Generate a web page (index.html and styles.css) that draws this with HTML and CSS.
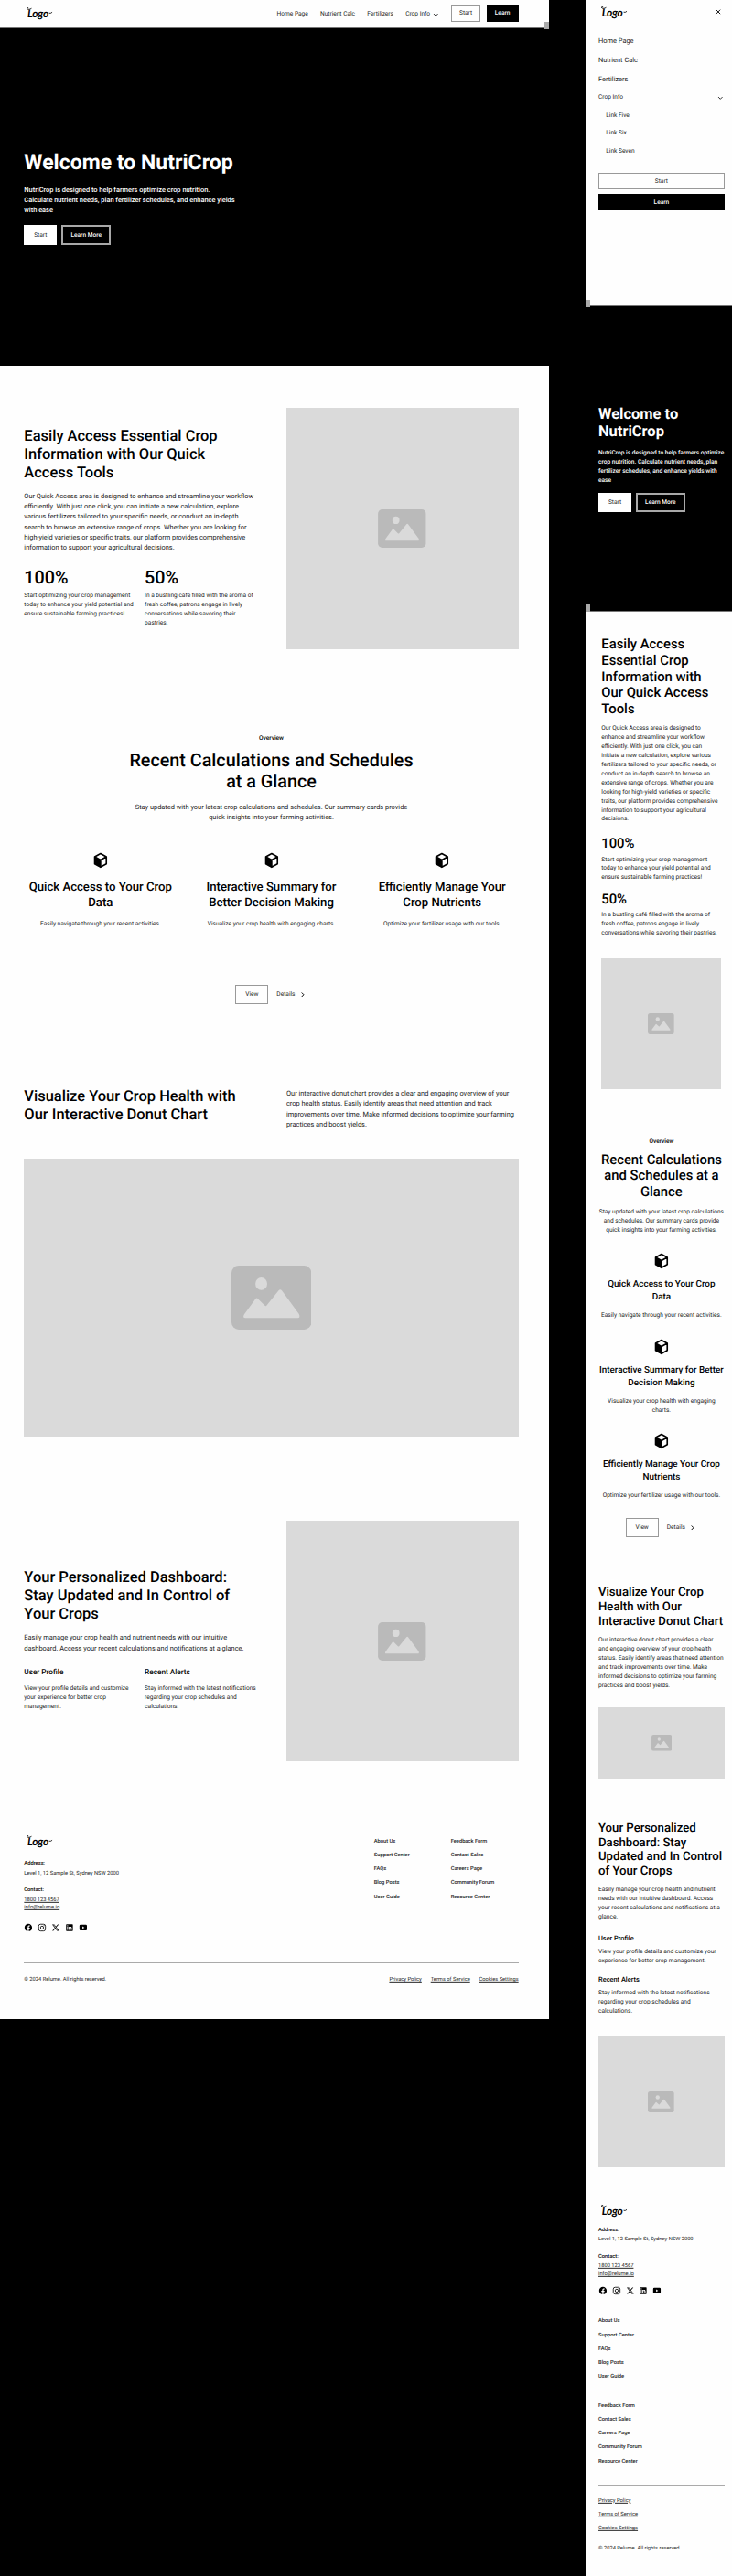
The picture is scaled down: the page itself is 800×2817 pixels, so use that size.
FILE: index.html
```html
<!DOCTYPE html>
<html lang="en">
<head>
<meta charset="utf-8">
<title>NutriCrop</title>
<link rel="stylesheet" href="styles.css">
</head>
<body>
<svg class="sprite" width="0" height="0" aria-hidden="true">
  <symbol id="picture" viewBox="0 0 100 80">
    <rect width="100" height="80" rx="9" fill="#bababa"/>
    <ellipse cx="37.3" cy="22.7" rx="7.4" ry="7.9" fill="#dadada"/>
    <path d="M16 61 30.200 41.500Q31.600 39.600 33 41.500L41.500 49.800Q43 51.500 44.300 49.500L59 31.200Q61 28.800 63 31.200L84.500 60.500Q86.500 65.400 83 65.400H17Q13.500 65.400 16 61Z" fill="#dadada"/>
  </symbol>
  <symbol id="cube" viewBox="0 0 24 24">
    <path d="M12 3 19.700 7.200V16.800L12 21 4.300 16.800V7.200ZM4.300 7.200 12 11.600 19.700 7.200M12 11.600V21" fill="none" stroke="#000" stroke-width="2" stroke-linejoin="round"/>
    <path d="M4.300 7.200 12 11.600V21L4.300 16.800Z"/>
  </symbol>
  <symbol id="chev-down" viewBox="0 0 16 16"><path d="M2.500 5.500 8 11l5.500-5.500" fill="none" stroke="#000" stroke-width="2"/></symbol>
  <symbol id="chev-right" viewBox="0 0 24 24"><path d="m9 6.500 5.500 5.500L9 17.500" fill="none" stroke="#000" stroke-width="2.400"/></symbol>
  <symbol id="close" viewBox="0 0 24 24"><path d="m6.500 6.500 11 11m0-11-11 11" fill="none" stroke="#000" stroke-width="2.200"/></symbol>
  <symbol id="swash" viewBox="0 0 72 36">
    <path d="M15 6C11 9 4 9 3 5Q4 2 7 4" fill="none" stroke="#000" stroke-width="2" stroke-linecap="round"/>
    <path d="M63 18Q66 19.500 70 16" fill="none" stroke="#000" stroke-width="2" stroke-linecap="round"/>
  </symbol>
  <symbol id="facebook" viewBox="0 0 24 24"><path d="M22 12.060C22 6.500 17.500 2 12 2S2 6.500 2 12.060c0 5 3.660 9.150 8.440 9.900v-7H7.900v-2.900h2.540V9.850c0-2.510 1.490-3.890 3.780-3.890 1.090 0 2.230.19 2.230.19v2.470h-1.260c-1.240 0-1.630.77-1.630 1.560v1.880h2.780l-.45 2.900h-2.330v7A10 10 0 0 0 22 12.060z"/></symbol>
  <symbol id="instagram" viewBox="0 0 24 24"><g fill="none" stroke="#000" stroke-width="2"><rect x="3" y="3" width="18" height="18" rx="5"/><circle cx="12" cy="12" r="4"/></g><circle cx="17.300" cy="6.700" r="1.300"/></symbol>
  <symbol id="x" viewBox="0 0 24 24"><path d="M17.180 3.500h2.900l-6.330 7.240L21.200 20.500h-5.830l-4.570-5.970-5.220 5.970h-2.900l6.770-7.740L2.300 3.500h5.980l4.130 5.460zm-1.020 15.300h1.610L7.420 5.150H5.700z"/></symbol>
  <symbol id="linkedin" viewBox="0 0 24 24"><path fill-rule="evenodd" d="M4.500 3h15A1.500 1.500 0 0 1 21 4.500v15a1.500 1.500 0 0 1-1.500 1.500h-15A1.500 1.500 0 0 1 3 19.500v-15A1.500 1.500 0 0 1 4.500 3zM8.300 18.300V9.800H5.700v8.500zM7 8.600a1.500 1.500 0 1 0 0-3 1.500 1.500 0 0 0 0 3zm11.300 9.700v-4.700c0-2.500-1.300-3.900-3.200-3.900-1.500 0-2.200.9-2.500 1.400V9.800H10v8.500h2.600v-4.600c0-1.200.6-1.800 1.500-1.800s1.400.7 1.400 1.800v4.600z"/></symbol>
  <symbol id="youtube" viewBox="0 0 24 24"><path fill-rule="evenodd" d="M5 4.500h14a3 3 0 0 1 3 3v9a3 3 0 0 1-3 3H5a3 3 0 0 1-3-3v-9a3 3 0 0 1 3-3zM10 8.800v6.400l5.300-3.200z"/></symbol>
</svg>

<main class="board">
  <div class="frame desktop">
    <header class="nav">
      <div class="logo"><svg><use href="#swash"/></svg><span>Logo</span></div>
      <nav class="nav-links">
        <a>Home Page</a><a>Nutrient Calc</a><a>Fertilizers</a>
        <a class="drop">Crop Info <svg class="chev"><use href="#chev-down"/></svg></a>
      </nav>
      <div class="nav-actions"><a class="btn small">Start</a><a class="btn small solid">Learn</a></div>
      <i class="handle"></i>
    </header>

    <section class="hero">
      <h1>Welcome to NutriCrop</h1>
      <p>NutriCrop is designed to help farmers optimize crop nutrition.<br>Calculate nutrient needs, plan fertilizer schedules, and enhance yields<br>with ease</p>
      <div class="actions"><a class="btn light">Start</a><a class="btn ghost">Learn More</a></div>
    </section>

    <section class="split">
      <div class="copy">
        <h2>Easily Access Essential Crop<br>Information with Our Quick<br>Access Tools</h2>
        <p class="lead">Our Quick Access area is designed to enhance and streamline your workflow<br>efficiently. With just one click, you can initiate a new calculation, explore<br>various fertilizers tailored to your specific needs, or conduct an in-depth<br>search to browse an extensive range of crops. Whether you are looking for<br>high-yield varieties or specific traits, our platform provides comprehensive<br>information to support your agricultural decisions.</p>
        <div class="pair">
          <div><strong class="stat">100%</strong><p>Start optimizing your crop management<br>today to enhance your yield potential and<br>ensure sustainable farming practices!</p></div>
          <div><strong class="stat">50%</strong><p>In a bustling café filled with the aroma of<br>fresh coffee, patrons engage in lively<br>conversations while savoring their<br>pastries.</p></div>
        </div>
      </div>
      <div class="image"><svg><use href="#picture"/></svg></div>
    </section>

    <section class="features">
      <p class="tag">Overview</p>
      <h2>Recent Calculations and Schedules<br>at a Glance</h2>
      <p class="lead">Stay updated with your latest crop calculations and schedules. Our summary cards provide<br>quick insights into your farming activities.</p>
      <div class="cards">
        <div class="card"><svg><use href="#cube"/></svg><h3>Quick Access to Your Crop<br>Data</h3><p>Easily navigate through your recent activities.</p></div>
        <div class="card"><svg><use href="#cube"/></svg><h3>Interactive Summary for<br>Better Decision Making</h3><p>Visualize your crop health with engaging charts.</p></div>
        <div class="card"><svg><use href="#cube"/></svg><h3>Efficiently Manage Your<br>Crop Nutrients</h3><p>Optimize your fertilizer usage with our tools.</p></div>
      </div>
      <div class="actions"><a class="btn">View</a><a class="more">Details <svg><use href="#chev-right"/></svg></a></div>
    </section>

    <section class="chart">
      <div class="chart-head">
        <h2>Visualize Your Crop Health with<br>Our Interactive Donut Chart</h2>
        <p class="lead">Our interactive donut chart provides a clear and engaging overview of your<br>crop health status. Easily identify areas that need attention and track<br>improvements over time. Make informed decisions to optimize your farming<br>practices and boost yields.</p>
      </div>
      <div class="image wide"><svg><use href="#picture"/></svg></div>
    </section>

    <section class="split">
      <div class="copy">
        <h2>Your Personalized Dashboard:<br>Stay Updated and In Control of<br>Your Crops</h2>
        <p class="lead">Easily manage your crop health and nutrient needs with our intuitive<br>dashboard. Access your recent calculations and notifications at a glance.</p>
        <div class="pair">
          <div><h4>User Profile</h4><p>View your profile details and customize<br>your experience for better crop<br>management.</p></div>
          <div><h4>Recent Alerts</h4><p>Stay informed with the latest notifications<br>regarding your crop schedules and<br>calculations.</p></div>
        </div>
      </div>
      <div class="image"><svg><use href="#picture"/></svg></div>
    </section>

    <footer class="footer">
      <div class="foot-top">
        <div class="contact">
          <div class="logo"><svg><use href="#swash"/></svg><span>Logo</span></div>
          <b>Address:</b><p>Level 1, 12 Sample St, Sydney NSW 2000</p>
          <b>Contact:</b><p><u>1800 123 4567</u><br><u>info@relume.io</u></p>
          <div class="social"><svg><use href="#facebook"/></svg><svg><use href="#instagram"/></svg><svg><use href="#x"/></svg><svg><use href="#linkedin"/></svg><svg><use href="#youtube"/></svg></div>
        </div>
        <div class="foot-links">
          <ul><li>About Us</li><li>Support Center</li><li>FAQs</li><li>Blog Posts</li><li>User Guide</li></ul>
          <ul><li>Feedback Form</li><li>Contact Sales</li><li>Careers Page</li><li>Community Forum</li><li>Resource Center</li></ul>
        </div>
      </div>
      <div class="legal"><p>© 2024 Relume. All rights reserved.</p><div class="policies"><u>Privacy Policy</u><u>Terms of Service</u><u>Cookies Settings</u></div></div>
    </footer>
  </div>

  <div class="frame mobile">
    <header class="menu">
      <div class="menu-bar"><div class="logo"><svg><use href="#swash"/></svg><span>Logo</span></div><svg class="x"><use href="#close"/></svg></div>
      <nav class="menu-links">
        <a>Home Page</a><a>Nutrient Calc</a><a>Fertilizers</a>
        <a class="drop">Crop Info <svg class="chev"><use href="#chev-down"/></svg></a>
        <a class="sub">Link Five</a><a class="sub">Link Six</a><a class="sub">Link Seven</a>
      </nav>
      <div class="menu-actions"><a class="btn small">Start</a><a class="btn small solid">Learn</a></div>
      <i class="handle"></i>
    </header>

    <section class="hero">
      <h1>Welcome to<br>NutriCrop</h1>
      <p>NutriCrop is designed to help farmers optimize<br>crop nutrition. Calculate nutrient needs, plan<br>fertilizer schedules, and enhance yields with<br>ease</p>
      <div class="actions"><a class="btn light">Start</a><a class="btn ghost">Learn More</a></div>
      <i class="handle"></i>
    </section>

    <section class="split inset">
      <div class="copy">
        <h2>Easily Access<br>Essential Crop<br>Information with<br>Our Quick Access<br>Tools</h2>
        <p class="lead">Our Quick Access area is designed to<br>enhance and streamline your workflow<br>efficiently. With just one click, you can<br>initiate a new calculation, explore various<br>fertilizers tailored to your specific needs, or<br>conduct an in-depth search to browse an<br>extensive range of crops. Whether you are<br>looking for high-yield varieties or specific<br>traits, our platform provides comprehensive<br>information to support your agricultural<br>decisions.</p>
        <div class="pair">
          <div><strong class="stat">100%</strong><p>Start optimizing your crop management<br>today to enhance your yield potential and<br>ensure sustainable farming practices!</p></div>
          <div><strong class="stat">50%</strong><p>In a bustling café filled with the aroma of<br>fresh coffee, patrons engage in lively<br>conversations while savoring their pastries.</p></div>
        </div>
      </div>
      <div class="image"><svg><use href="#picture"/></svg></div>
    </section>

    <section class="features">
      <p class="tag">Overview</p>
      <h2>Recent Calculations<br>and Schedules at a<br>Glance</h2>
      <p class="lead">Stay updated with your latest crop calculations<br>and schedules. Our summary cards provide<br>quick insights into your farming activities.</p>
      <div class="cards">
        <div class="card"><svg><use href="#cube"/></svg><h3>Quick Access to Your Crop<br>Data</h3><p>Easily navigate through your recent activities.</p></div>
        <div class="card"><svg><use href="#cube"/></svg><h3>Interactive Summary for Better<br>Decision Making</h3><p>Visualize your crop health with engaging<br>charts.</p></div>
        <div class="card"><svg><use href="#cube"/></svg><h3>Efficiently Manage Your Crop<br>Nutrients</h3><p>Optimize your fertilizer usage with our tools.</p></div>
      </div>
      <div class="actions"><a class="btn">View</a><a class="more">Details <svg><use href="#chev-right"/></svg></a></div>
    </section>

    <section class="chart">
      <div class="chart-head">
        <h2>Visualize Your Crop<br>Health with Our<br>Interactive Donut Chart</h2>
        <p class="lead">Our interactive donut chart provides a clear<br>and engaging overview of your crop health<br>status. Easily identify areas that need attention<br>and track improvements over time. Make<br>informed decisions to optimize your farming<br>practices and boost yields.</p>
      </div>
      <div class="image wide"><svg><use href="#picture"/></svg></div>
    </section>

    <section class="split profile">
      <div class="copy">
        <h2>Your Personalized<br>Dashboard: Stay<br>Updated and In Control<br>of Your Crops</h2>
        <p class="lead">Easily manage your crop health and nutrient<br>needs with our intuitive dashboard. Access<br>your recent calculations and notifications at a<br>glance.</p>
        <div class="pair">
          <div><h4>User Profile</h4><p>View your profile details and customize your<br>experience for better crop management.</p></div>
          <div><h4>Recent Alerts</h4><p>Stay informed with the latest notifications<br>regarding your crop schedules and<br>calculations.</p></div>
        </div>
      </div>
      <div class="image"><svg><use href="#picture"/></svg></div>
    </section>

    <footer class="footer">
      <div class="contact">
        <div class="logo"><svg><use href="#swash"/></svg><span>Logo</span></div>
        <b>Address:</b><p>Level 1, 12 Sample St, Sydney NSW 2000</p>
        <b>Contact:</b><p><u>1800 123 4567</u><br><u>info@relume.io</u></p>
        <div class="social"><svg><use href="#facebook"/></svg><svg><use href="#instagram"/></svg><svg><use href="#x"/></svg><svg><use href="#linkedin"/></svg><svg><use href="#youtube"/></svg></div>
      </div>
      <div class="foot-links">
        <ul><li>About Us</li><li>Support Center</li><li>FAQs</li><li>Blog Posts</li><li>User Guide</li></ul>
        <ul><li>Feedback Form</li><li>Contact Sales</li><li>Careers Page</li><li>Community Forum</li><li>Resource Center</li></ul>
      </div>
      <div class="legal"><div class="policies"><u>Privacy Policy</u><u>Terms of Service</u><u>Cookies Settings</u></div><p>© 2024 Relume. All rights reserved.</p></div>
    </footer>
  </div>
</main>
</body>
</html>
```

FILE: styles.css
```css
* { box-sizing: border-box; margin: 0; padding: 0; }

body { background: #000; }

.sprite { position: absolute; }

/* Two artboards side by side, each drawn at 41% of its design size. */
.board {
  display: grid;
  grid-template-columns: 600px 160px;
  column-gap: 40px;
  align-items: start;
  height: 2817px;
  overflow: hidden;
}

.frame {
  zoom: 0.41181;
  background: #fefefe;
  color: #222;
  font: 16px/24px Roboto, "Liberation Sans", sans-serif;
  text-rendering: geometricPrecision;
  white-space: nowrap;
}

.desktop { --left: 64px; --right: 81px; height: 5362px; }
.mobile { --left: 34px; --right: 20px; height: 6842px; }

h1, h2, h3 { font-weight: 500; }
h1 { font-weight: 700; }
h4, b, .tag { font-weight: 500; }
h2, h3, h4, b, .tag, .stat { color: #000; }
ul { list-style: none; }

/* Optical drop of the type inside its line boxes */
h1, h2, h3, h4, p, b, .stat, li, .policies u,
.nav-links a, .menu-links a, .more { translate: 0 2px; }

/* Logo */
.logo { position: relative; width: 84px; height: 36px; color: #000; }
.logo span {
  display: block;
  padding-left: 9px;
  font: italic 700 29px/37px Lato, sans-serif;
  letter-spacing: -0.5px;
}
.logo svg { position: absolute; left: 4px; top: 0; width: 72px; height: 36px; }

/* Buttons */
.actions { display: flex; gap: 12px; }
.btn {
  display: flex;
  align-items: center;
  justify-content: center;
  height: 50px;
  padding: 3px 24px 0;
  border: 1px solid #999;
}
.btn.small { height: 43px; padding: 3px 20px 0; }
.btn.solid { background: #000; border-color: #000; color: #fff; font-weight: 500; }
.btn.light { background: #fff; border-color: #fff; height: 52px; color: #222; }
.btn.ghost { height: 52px; padding: 3px 20px 0; border: 5px solid #a8a8a8; color: #fff; font-weight: 500; }
.more { display: flex; align-items: center; gap: 8px; }
.more svg { width: 24px; height: 24px; }
.chev { width: 16px; height: 16px; }
.handle { position: absolute; background: #aaa; }

/* Desktop navigation */
.nav {
  position: relative;
  display: flex;
  align-items: center;
  height: 72px;
  padding: 0 var(--right) 0 var(--left);
}
.nav .handle { right: 0; top: 58px; width: 15px; height: 20px; z-index: 1; }
.nav-links { display: flex; gap: 32px; margin-left: auto; }
.drop { display: flex; align-items: center; gap: 6px; }
.nav-actions { display: flex; gap: 15px; margin-left: 33px; }

/* Mobile menu */
.menu { position: relative; height: 812px; padding: 0 var(--right) 0 var(--left); }
.menu-bar { display: flex; align-items: center; justify-content: space-between; height: 64px; margin-bottom: 16px; }
.menu-bar .x { width: 24px; height: 24px; margin-right: 5px; }
.menu-links { display: flex; flex-direction: column; }
.menu-links a { padding: 12px 0; font-size: 18px; line-height: 27px; }
.menu-links .drop, .menu-links .sub { font-size: 16px; line-height: 24px; }
.menu-links .drop { justify-content: space-between; padding-right: 4px; }
.menu-links .sub { padding-left: 20px; }
.menu-actions { display: grid; gap: 14px; margin-top: 34px; }
.menu .handle, .mobile .hero .handle { left: 0; bottom: -4px; width: 12px; height: 20px; z-index: 1; }

/* Hero */
.hero {
  position: relative;
  display: flex;
  flex-direction: column;
  justify-content: center;
  height: 900px;
  padding: 0 var(--right) 0 var(--left);
  background: #000;
  border-top: 4px solid #777;
  color: #fff;
}
.hero h1 { font-size: 56px; line-height: 67.2px; margin-bottom: 24px; }
.hero p { font-size: 18px; line-height: 27px; font-weight: 500; margin-bottom: 30px; }

/* Shared section text */
h2 { font-size: 40px; line-height: 48px; margin-bottom: 24px; }
.lead { font-size: 18px; line-height: 27px; }
.split, .features, .chart { padding: 112px var(--right) 112px var(--left); }

/* Copy beside picture */
.split { display: grid; grid-template-columns: 616px 616px; column-gap: 80px; align-items: center; }
.pair { display: grid; grid-template-columns: 296px 296px; gap: 24px; margin-top: 32px; padding: 8px 0; }
.stat { display: block; font-size: 48px; line-height: 57.6px; font-weight: 500; margin-bottom: 8px; }
h4 { font-size: 20px; line-height: 28px; margin-bottom: 16px; }
.image { display: flex; align-items: center; justify-content: center; height: 640px; background: #dadada; }
.image svg { width: 128px; height: 102px; }

/* Feature cards */
.features { display: flex; flex-direction: column; align-items: center; text-align: center; }
.tag { margin-bottom: 16px; }
.features h2 { font-size: 48px; line-height: 57.6px; }
.cards { display: grid; grid-template-columns: repeat(3, 1fr); gap: 48px; width: 100%; margin: 80px 0 152px; }
.card > svg { display: block; width: 48px; height: 48px; margin: 0 auto 24px; }
.card h3 { font-size: 32px; line-height: 41.6px; margin-bottom: 24px; }
.features .actions { gap: 22px; height: 48px; }

/* Chart */
.chart-head { display: grid; grid-template-columns: 616px 616px; column-gap: 80px; margin-bottom: 80px; }
.chart-head h2 { margin: 0; }
.image.wide { height: 738px; }
.image.wide svg { width: 212px; height: 170px; }

/* Footer */
.footer { padding: 80px var(--right) 0 var(--left); font-size: 14px; line-height: 21px; }
.foot-top { display: grid; grid-template-columns: 1fr 383.5px; margin-bottom: 80px; }
.contact .logo { margin-bottom: 32px; }
.contact b { display: block; margin-bottom: 4px; }
.contact p { margin-bottom: 24px; }
.social { display: flex; gap: 12px; margin-top: 32px; }
.social svg { width: 24px; height: 24px; }
.foot-links { display: grid; grid-template-columns: 1fr 1fr; gap: 24px; font-weight: 500; }
.foot-links li { padding: 8px 0; }
.legal { display: flex; justify-content: space-between; padding-top: 32px; border-top: 1px solid #aaa; }
.policies { display: flex; gap: 24px; }

/* Mobile overrides */
.mobile .hero { height: 812px; border-bottom: 4px solid #777; }
.mobile .hero h1 { font-size: 40px; line-height: 48px; margin-bottom: 20px; }
.mobile .hero p { font-size: 16px; line-height: 24px; margin-bottom: 22px; }
.mobile .lead { font-size: 16px; line-height: 24px; }
.mobile h2 { font-size: 32px; line-height: 38.4px; margin-bottom: 18px; }
.mobile .inset h2, .mobile .features h2 { font-size: 36px; line-height: 43.2px; }
.mobile .split, .mobile .features, .mobile .chart { padding-top: 64px; padding-bottom: 64px; }
.mobile .split, .mobile .pair, .mobile .cards, .mobile .chart-head { grid-template-columns: 100%; }
.mobile .inset { padding-left: 42px; padding-right: 28px; }
.mobile .stat { font-size: 36px; line-height: 43.2px; }
.mobile .pair { padding: 0; margin-bottom: 56px; }
.mobile .image { height: 347px; }
.mobile .image svg { width: 70px; height: 56px; }
.mobile .tag { margin-bottom: 13px; }
.mobile .features h2 { margin-bottom: 19px; }
.mobile .cards { margin: 48px 0; }
.mobile .card > svg { margin-bottom: 20px; }
.mobile .card h3 { font-size: 24px; line-height: 33.6px; margin-bottom: 20px; }
.mobile .features .actions { height: 50px; }
.mobile .chart { padding-bottom: 48px; }
.mobile .chart-head { margin-bottom: 48px; }
.mobile .chart-head h2 { margin-bottom: 18px; }
.mobile .image.wide { height: 188px; }
.mobile .image.wide svg { width: 54px; height: 43px; }
.mobile h4 { font-size: 18px; line-height: 25.2px; margin-bottom: 12px; }
.mobile .profile { padding-bottom: 48px; }
.mobile .footer { padding-top: 48px; }
.mobile .contact .logo { margin-bottom: 24px; }
.mobile .social { margin-top: 24px; }
.mobile .foot-links { grid-template-columns: 100%; gap: 40px; margin: 48px 0; }
.mobile .legal { flex-direction: column; gap: 32px; padding-top: 25px; }
.mobile .policies { flex-direction: column; gap: 16px; }
```
